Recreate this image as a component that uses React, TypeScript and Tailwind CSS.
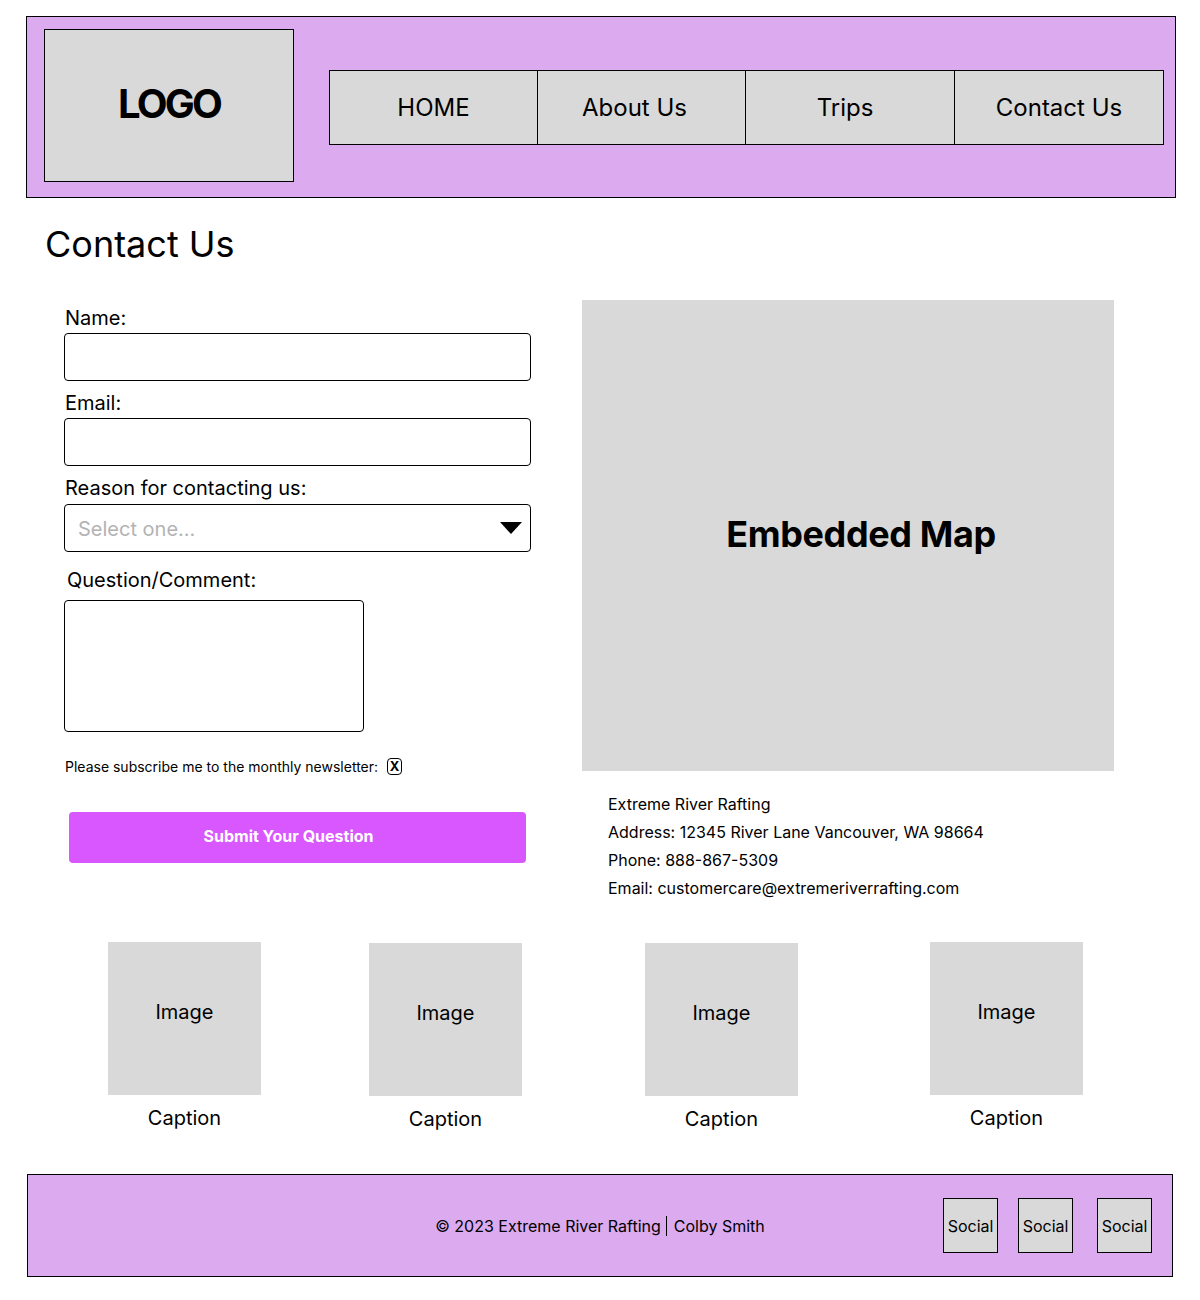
import React from "react";

const navItems = [
  { label: "HOME", cls: "w-[209px] border-l" },
  { label: "About Us", cls: "w-[208px] pr-[14px]" },
  { label: "Trips", cls: "w-[209px] pr-[10px]" },
  { label: "Contact Us", cls: "w-[209px]" },
];

const gallery = [
  { ml: "ml-[108px]", mt: "mt-0" },
  { ml: "ml-[108px]", mt: "mt-px" },
  { ml: "ml-[123px]", mt: "mt-px" },
  { ml: "ml-[132px]", mt: "mt-0" },
];

const contactLines = [
  "Extreme River Rafting",
  "Address: 12345 River Lane Vancouver, WA 98664",
  "Phone: 888-867-5309",
  "Email: customercare@extremeriverrafting.com",
];

const App: React.FC = () => {
  return (
    <div className="w-[1200px] min-h-[1300px] bg-white text-black font-['Inter',_'Liberation_Sans',_sans-serif] pt-[16px]">
      {/* Header */}
      <header className="ml-[26px] w-[1150px] h-[182px] border border-black bg-[#dcaaef] flex items-start">
        <div className="ml-[17px] mt-[12px] w-[250px] h-[153px] border border-black bg-[#d9d9d9] flex items-center justify-center pb-[4px]">
          <span className="text-[40px] font-bold tracking-[-0.07em] leading-none">LOGO</span>
        </div>
        <nav className="ml-[35px] mt-[53px] flex">
          {navItems.map((item) => (
            <div
              key={item.label}
              className={`h-[75px] ${item.cls} border-y border-r border-black bg-[#d9d9d9] flex items-center justify-center text-[24px]`}
            >
              {item.label}
            </div>
          ))}
        </nav>
      </header>

      {/* Page title */}
      <h1 className="ml-[45px] mt-[24px] text-[36px] leading-[44px] font-normal">Contact Us</h1>

      {/* Form + map */}
      <div className="flex items-start mt-[34px]">
        <form className="ml-[64px] w-[467px] flex flex-col pt-[6px]">
          <label className="ml-px text-[20px] leading-[24px]">Name:</label>
          <input type="text" className="mt-[3px] h-[48px] w-full border border-black rounded-[4px] bg-white" />

          <label className="ml-px mt-[10px] text-[20px] leading-[24px]">Email:</label>
          <input type="text" className="mt-[3px] h-[48px] w-full border border-black rounded-[4px] bg-white" />

          <label className="ml-px mt-[10px] text-[20px] leading-[24px]">Reason for contacting us:</label>
          <div className="mt-[4px] h-[48px] w-full border border-black rounded-[4px] flex items-center justify-between pl-[13px] pr-[8px]">
            <span className="text-[20px] text-[#b3b3b3] mt-[2px]">Select one...</span>
            <svg width="22" height="12" viewBox="0 0 22 12">
              <polygon points="0,0 22,0 11,12" fill="#000" />
            </svg>
          </div>

          <label className="ml-[3px] mt-[16px] text-[20px] leading-[24px]">Question/Comment:</label>
          <textarea className="mt-[8px] h-[132px] w-[300px] border border-black rounded-[4px] resize-none" />

          <div className="ml-px mt-[24px] flex items-center h-[20px] text-[14px]">
            <span>Please subscribe me to the monthly newsletter:</span>
            <span className="ml-[9px] w-[15px] h-[17px] border border-black rounded-[4px] flex items-center justify-center text-[13px] font-bold leading-none">
              X
            </span>
          </div>

          <button
            type="button"
            className="ml-[5px] mt-[36px] w-[457px] h-[51px] rounded-[4px] bg-[#d957fe] text-white text-[16px] font-bold pr-[18px] pb-[3px]"
          >
            Submit Your Question
          </button>
        </form>

        <div className="ml-[51px] w-[532px]">
          <div className="h-[471px] bg-[#d9d9d9] flex items-center justify-center pl-[26px] pb-[4px]">
            <span className="text-[36px] font-bold tracking-[-0.01em]">Embedded Map</span>
          </div>
          <div className="mt-[19px] pl-[26px] text-[16px] leading-[28px]">
            {contactLines.map((line) => (
              <p key={line}>{line}</p>
            ))}
          </div>
        </div>
      </div>

      {/* Image gallery */}
      <div className="mt-[40px] flex items-start">
        {gallery.map((g, i) => (
          <div key={i} className={`${g.ml} ${g.mt} w-[153px] flex flex-col items-center`}>
            <div className="w-[153px] h-[153px] bg-[#d9d9d9] flex items-center justify-center text-[20px] pb-[14px]">
              Image
            </div>
            <span className="mt-[11px] text-[20px] leading-[24px]">Caption</span>
          </div>
        ))}
      </div>

      {/* Footer */}
      <footer className="ml-[27px] mt-[43px] w-[1146px] h-[103px] border border-black bg-[#dcaaef] grid grid-cols-[1fr_auto_1fr] items-center">
        <div />
        <div className="flex items-center text-[16px]">
          <span>© 2023 Extreme River Rafting</span>
          <span className="ml-[5px] mr-[7px] w-px h-[20px] bg-black" />
          <span>Colby Smith</span>
        </div>
        <div className="flex justify-end pr-[20px]">
          {["ml-0", "ml-[20px]", "ml-[24px]"].map((ml, i) => (
            <div
              key={i}
              className={`${ml} w-[55px] h-[55px] border border-black bg-[#d9d9d9] flex items-center justify-center text-[16px]`}
            >
              Social
            </div>
          ))}
        </div>
      </footer>
    </div>
  );
};

export default App;
